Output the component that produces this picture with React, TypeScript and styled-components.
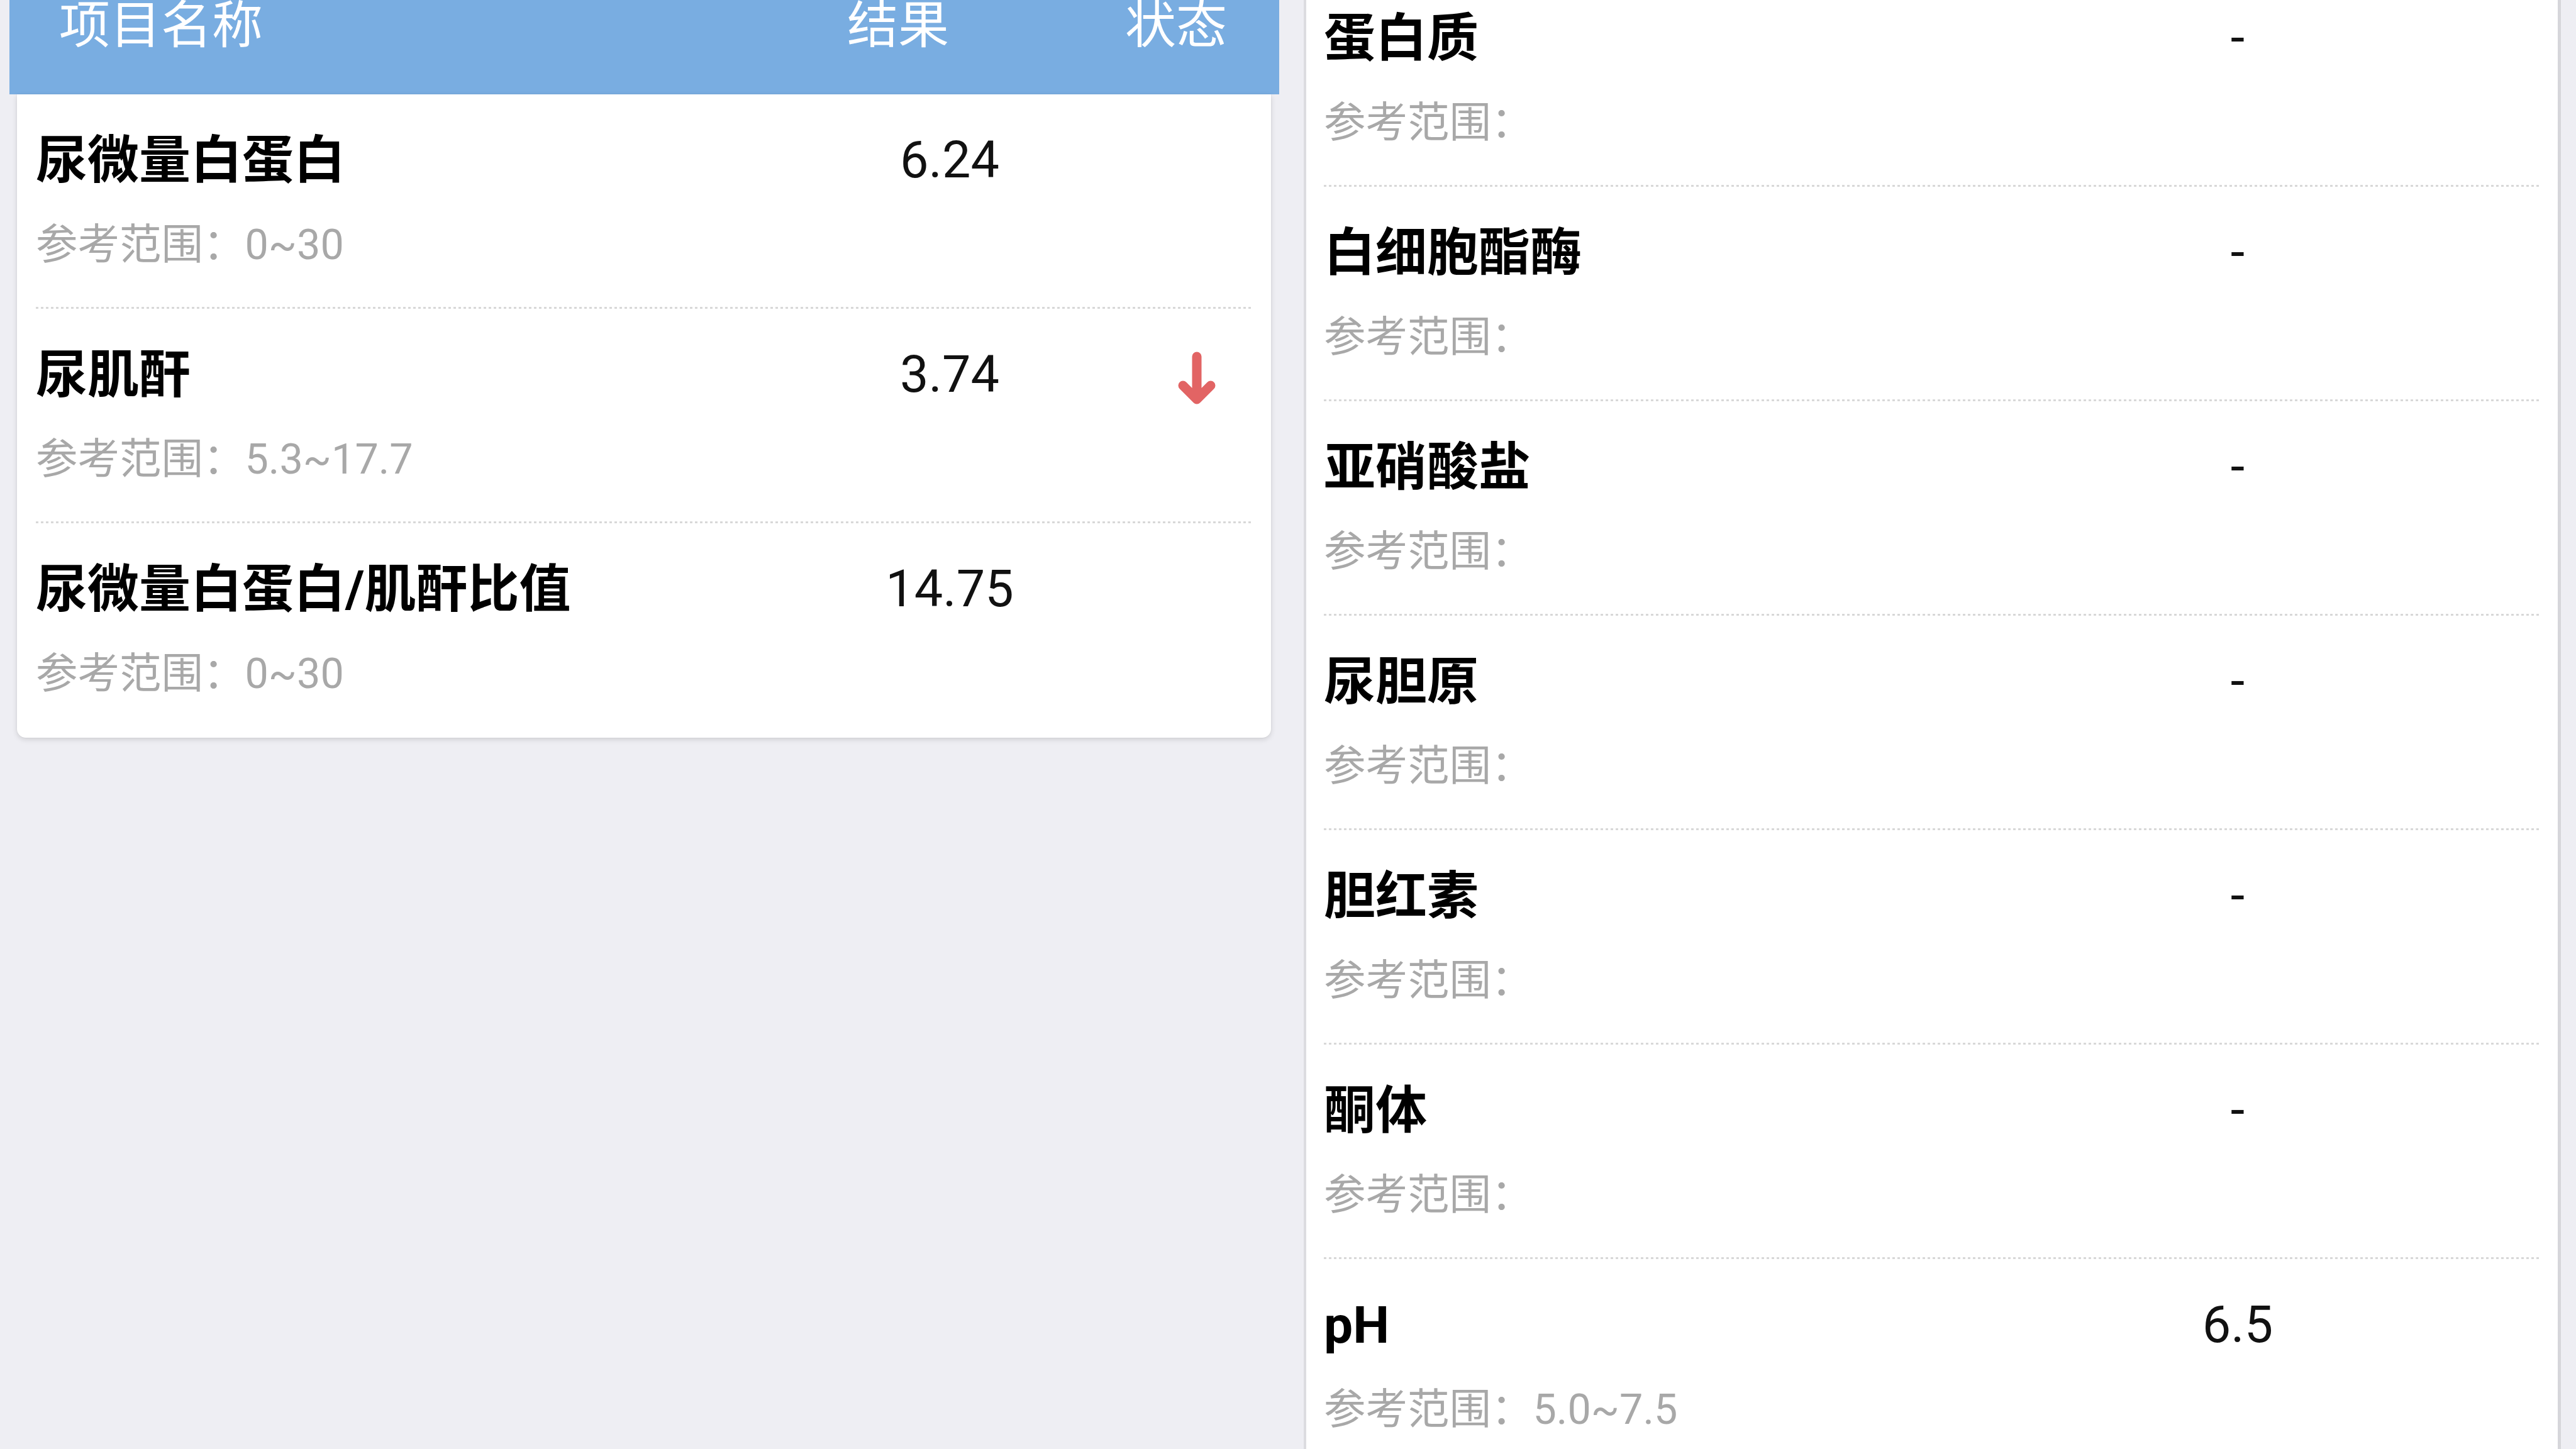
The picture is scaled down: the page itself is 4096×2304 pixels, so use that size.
import React from "react";
import styled, { createGlobalStyle } from "styled-components";

const GlobalStyle = createGlobalStyle`
  html, body {
    margin: 0;
    padding: 0;
    background: #eeeef3;
    overflow: hidden;
  }
  body {
    font-family: Roboto, "Noto Sans CJK SC", sans-serif;
  }
`;

const Screen = styled.div`
  width: 4096px;
  height: 2304px;
  display: flex;
  background: #eeeef3;
  overflow: hidden;
`;

const LeftColumn = styled.div`
  width: 2073px;
  flex: none;
  display: flex;
  flex-direction: column;
`;

const TableHeader = styled.div`
  height: 150px;
  margin: 0 39px 0 15px;
  padding: 0 85px 0 79px;
  box-sizing: border-box;
  background: #79ade1;
  color: #ffffff;
  display: grid;
  grid-template-columns: 1fr 160px 160px;
  column-gap: 282px;
  align-items: start;
  overflow: hidden;
  font-family: "Noto Sans CJK SC", sans-serif;
  font-size: 81px;
  line-height: 80px;
`;

const HeadCell = styled.div`
  white-space: nowrap;
  margin-top: -7px;
`;

const Card = styled.div`
  margin: 0 52px 0 27px;
  padding: 0 28px 0 30px;
  background: #ffffff;
  border-radius: 0 0 14px 14px;
  box-shadow: 0 3px 8px rgba(0, 0, 0, 0.13), 0 0 2px rgba(0, 0, 0, 0.08);
`;

const SidePanel = styled.div`
  width: 1999px;
  flex: none;
  box-sizing: border-box;
  height: 2304px;
  background: #ffffff;
  border-left: 4px solid #dcdce0;
  border-right: 5px solid #d6d6da;
  padding: 0 26px 0 28px;
  overflow: hidden;
`;

const ScrolledList = styled.div`
  margin-top: -44px;
`;

const Row = styled.div<{ $last?: boolean }>`
  display: grid;
  grid-template-columns: 1fr 606px 180px;
  grid-template-rows: 96px 80px;
  row-gap: 46px;
  padding: 57px 0 62px;
  background: ${(p) =>
    p.$last
      ? "none"
      : "repeating-linear-gradient(to right, #d8d8d8 0 4px, transparent 4px 8px) left bottom / 100% 3px no-repeat"};
`;

const Name = styled.div`
  grid-column: 1;
  grid-row: 1;
  font-size: 82px;
  line-height: 96px;
  font-weight: 700;
  color: #000000;
  white-space: nowrap;
`;

const Value = styled.div`
  grid-column: 2;
  grid-row: 1;
  text-align: center;
  font-size: 81px;
  line-height: 96px;
  color: #111111;
`;

const Status = styled.div`
  grid-column: 3;
  grid-row: 1;
  display: flex;
  align-items: center;
  justify-content: center;
`;

const Range = styled.div`
  grid-column: 1 / -1;
  grid-row: 2;
  font-size: 66.5px;
  line-height: 80px;
  color: #a8a8a8;
  white-space: nowrap;
`;

const ArrowSvg = styled.svg`
  width: 62px;
  height: 86px;
  margin-top: 12px;
`;

type Item = { name: string; value: string; range: string; low?: boolean };

const leftItems: Item[] = [
  { name: "尿微量白蛋白", value: "6.24", range: "0~30" },
  { name: "尿肌酐", value: "3.74", range: "5.3~17.7", low: true },
  { name: "尿微量白蛋白/肌酐比值", value: "14.75", range: "0~30" },
];

const rightItems: Item[] = [
  { name: "蛋白质", value: "-", range: "" },
  { name: "白细胞酯酶", value: "-", range: "" },
  { name: "亚硝酸盐", value: "-", range: "" },
  { name: "尿胆原", value: "-", range: "" },
  { name: "胆红素", value: "-", range: "" },
  { name: "酮体", value: "-", range: "" },
  { name: "pH", value: "6.5", range: "5.0~7.5" },
];

const DownArrow = () => (
  <ArrowSvg viewBox="0 0 62 86" fill="none">
    <path
      d="M31 8 V76 M9 54 L31 76 L53 54"
      stroke="#e26464"
      strokeWidth="15"
      strokeLinecap="round"
      strokeLinejoin="round"
    />
  </ArrowSvg>
);

const ResultRow = ({ item, last }: { item: Item; last?: boolean }) => (
  <Row $last={last}>
    <Name>{item.name}</Name>
    <Value>{item.value}</Value>
    <Status>{item.low ? <DownArrow /> : null}</Status>
    <Range>参考范围：{item.range}</Range>
  </Row>
);

export default function App() {
  return (
    <>
      <GlobalStyle />
      <Screen>
        <LeftColumn>
          <TableHeader>
            <HeadCell>项目名称</HeadCell>
            <HeadCell>结果</HeadCell>
            <HeadCell>状态</HeadCell>
          </TableHeader>
          <Card>
            {leftItems.map((it, i) => (
              <ResultRow key={it.name} item={it} last={i === leftItems.length - 1} />
            ))}
          </Card>
        </LeftColumn>
        <SidePanel>
          <ScrolledList>
            {rightItems.map((it, i) => (
              <ResultRow key={it.name} item={it} last={i === rightItems.length - 1} />
            ))}
          </ScrolledList>
        </SidePanel>
      </Screen>
    </>
  );
}
